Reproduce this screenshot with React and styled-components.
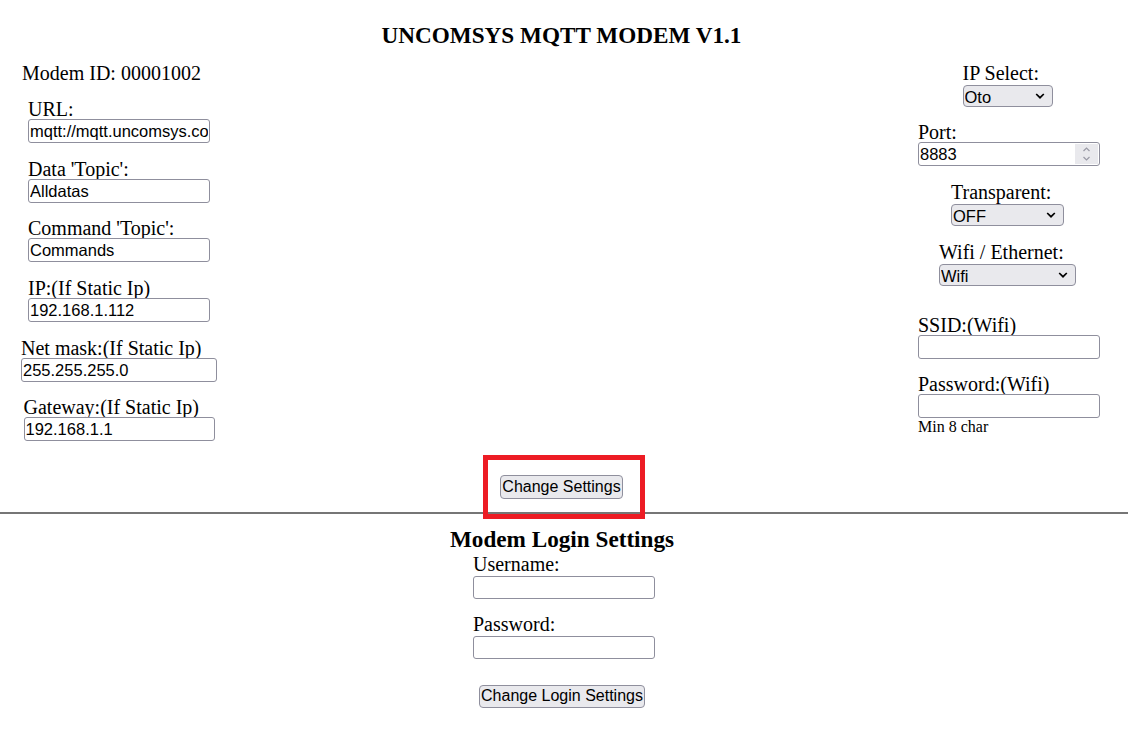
import React from 'react';
import styled, { createGlobalStyle } from 'styled-components';

const GlobalStyle = createGlobalStyle`
	html, body {
		margin: 0;
		padding: 0;
		background: #fff;
	}
	body {
		font-family: "Liberation Serif", "Times New Roman", serif;
		font-size: 20px;
		color: #000;
	}
`;

const Page = styled.div`
	padding-top: 22px;
`;

const Heading = styled.h3`
	margin: ${({ $mt }) => $mt || 0}px 0 0;
	padding-right: ${({ $shift }) => $shift || 0}px;
	text-align: center;
	font-size: 23.2px;
	line-height: 27px;
	font-weight: bold;
`;

const Columns = styled.div`
	display: flex;
	justify-content: space-between;
	margin-top: 13.75px;
	padding-right: 28px;
`;

const LeftColumn = styled.div`
	width: 238px;
	display: flex;
	flex-direction: column;
	align-items: center;
`;

const RightColumn = styled.div`
	width: 182px;
	display: flex;
	flex-direction: column;
	align-items: center;
`;

const ModemId = styled.div`
	align-self: flex-start;
	margin-left: 22px;
	margin-bottom: 16.5px;
	line-height: 20px;
`;

const Field = styled.div`
	display: flex;
	flex-direction: column;
	align-items: flex-start;
	margin-top: ${({ $extra }) => $extra || 0}px;
	margin-bottom: ${({ $mb }) => ($mb === undefined ? 15.6 : $mb)}px;
	margin-right: ${({ $shift }) => $shift || 0}px;
`;

const Label = styled.label`
	display: block;
	line-height: 20px;
	white-space: nowrap;
`;

const TextInput = styled.input`
	box-sizing: border-box;
	display: block;
	width: ${({ $w }) => $w || 182}px;
	height: ${({ $h }) => $h || 24}px;
	margin: ${({ $mt }) => $mt || 0}px 0 0;
	padding: 1px 1px 0;
	border: 1px solid #8f8f9d;
	border-radius: 3px;
	background: #fff;
	color: #000;
	font-family: "Liberation Sans", Arial, sans-serif;
	font-size: 16.5px;
	outline: none;
`;

const NumberWrap = styled.div`
	position: relative;
`;

const Spinner = styled.svg`
	position: absolute;
	right: 2px;
	top: 2px;
`;

const SelectWrap = styled.div`
	position: relative;
	width: ${({ $w }) => $w}px;
	height: 22px;
	margin-top: 2px;
`;

const Select = styled.select`
	box-sizing: border-box;
	appearance: none;
	width: 100%;
	height: 100%;
	margin: 0;
	padding: 1px 0 0 1px;
	border: 1px solid #8f8f9d;
	border-radius: 4px;
	background: #e9e9ed;
	color: #000;
	font-family: "Liberation Sans", Arial, sans-serif;
	font-size: 16.5px;
	outline: none;
`;

const Chevron = styled.svg`
	position: absolute;
	right: 8px;
	top: 50%;
	transform: translateY(-50%);
	pointer-events: none;
`;

const Note = styled.div`
	font-size: 16px;
	line-height: 18px;
`;

const ButtonRow = styled.div`
	display: flex;
	justify-content: center;
	margin-top: ${({ $mt }) => $mt || 0}px;
	padding-right: ${({ $shift }) => $shift || 0}px;
`;

const Marked = styled.div`
	position: relative;
`;

const RedFrame = styled.div`
	position: absolute;
	left: -17px;
	top: -19px;
	width: 162px;
	height: 64px;
	box-sizing: border-box;
	border: 5px solid #ed1c24;
	z-index: 2;
	pointer-events: none;
`;

const Button = styled.button`
	box-sizing: border-box;
	height: ${({ $h }) => $h || 24}px;
	margin: 0;
	padding: 0 1.5px;
	border: 1px solid #8f8f9d;
	border-radius: 4px;
	background: #e9e9ed;
	color: #000;
	font-family: "Liberation Sans", Arial, sans-serif;
	font-size: 16px;
	line-height: 1;
	cursor: pointer;
`;

const Divider = styled.div`
	position: relative;
	z-index: 1;
	height: 0;
	margin-top: 12.5px;
	border-top: 2px solid #767676;
`;

const LoginBox = styled.div`
	display: flex;
	flex-direction: column;
	align-items: flex-start;
	width: fit-content;
	margin: 1px auto 0;
`;

const SelectField = ({ label, width, options, shift }) => (
	<Field $shift={shift}>
		<Label>{label}</Label>
		<SelectWrap $w={width}>
			<Select defaultValue={options[0]}>
				{options.map(o => <option key={o}>{o}</option>)}
			</Select>
			<Chevron width="10" height="7" viewBox="0 0 10 7">
				<path d="M1.2 1.5 L5 5.2 L8.8 1.5" fill="none" stroke="#000" strokeWidth="1.7" />
			</Chevron>
		</SelectWrap>
	</Field>
);

const leftFields = [
	{ label: 'URL:', value: 'mqtt://mqtt.uncomsys.com', w: 182 },
	{ label: "Data 'Topic':", value: 'Alldatas', w: 182 },
	{ label: "Command 'Topic':", value: 'Commands', w: 182 },
	{ label: 'IP:(If Static Ip)', value: '192.168.1.112', w: 182 },
	{ label: 'Net mask:(If Static Ip)', value: '255.255.255.0', w: 196 },
	{ label: 'Gateway:(If Static Ip)', value: '192.168.1.1', w: 191 },
];

export default function App() {
	return (
		<Page>
			<GlobalStyle />
			<Heading $shift={5}>UNCOMSYS MQTT MODEM V1.1</Heading>

			<Columns>
				<LeftColumn>
					<ModemId>Modem ID: 00001002</ModemId>
					{leftFields.map(f => (
						<Field key={f.label}>
							<Label>{f.label}</Label>
							<TextInput $w={f.w} defaultValue={f.value} />
						</Field>
					))}
				</LeftColumn>

				<RightColumn>
					<SelectField label="IP Select:" width={90} options={['Oto', 'Static']} shift={3} />
					<Field>
						<Label>Port:</Label>
						<NumberWrap>
							<TextInput defaultValue="8883" />
							<Spinner width="23" height="20" viewBox="0 0 23 20">
								<rect x="0" y="0" width="23" height="20" fill="#e9e9ed" />
								<path d="M8.5 7 L11.5 4 L14.5 7" fill="none" stroke="#9a9aa6" strokeWidth="1.2" />
								<path d="M8.5 13 L11.5 16 L14.5 13" fill="none" stroke="#9a9aa6" strokeWidth="1.2" />
							</Spinner>
						</NumberWrap>
					</Field>
					<SelectField label="Transparent:" width={113} options={['OFF', 'ON']} shift={3} />
					<SelectField label="Wifi / Ethernet:" width={137} options={['Wifi', 'Ethernet']} shift={3} />
					<Field $extra={13.4}>
						<Label>SSID:(Wifi)</Label>
						<TextInput />
					</Field>
					<Field $mb={0}>
						<Label>Password:(Wifi)</Label>
						<TextInput type="password" />
						<Note>Min 8 char</Note>
					</Field>
				</RightColumn>
			</Columns>

			<ButtonRow $mt={17.5} $shift={5}>
				<Marked>
					<Button>Change Settings</Button>
					<RedFrame />
				</Marked>
			</ButtonRow>

			<Divider />

			<Heading $mt={12.5} $shift={4}>Modem Login Settings</Heading>
			<LoginBox>
				<Field $mb={15}>
					<Label>Username:</Label>
					<TextInput $h={23} $mt={2} />
				</Field>
				<Field $mb={0}>
					<Label>Password:</Label>
					<TextInput $h={23} $mt={2} type="password" />
				</Field>
			</LoginBox>
			<ButtonRow $mt={25.5} $shift={4}>
				<Button $h={23}>Change Login Settings</Button>
			</ButtonRow>
		</Page>
	);
}
